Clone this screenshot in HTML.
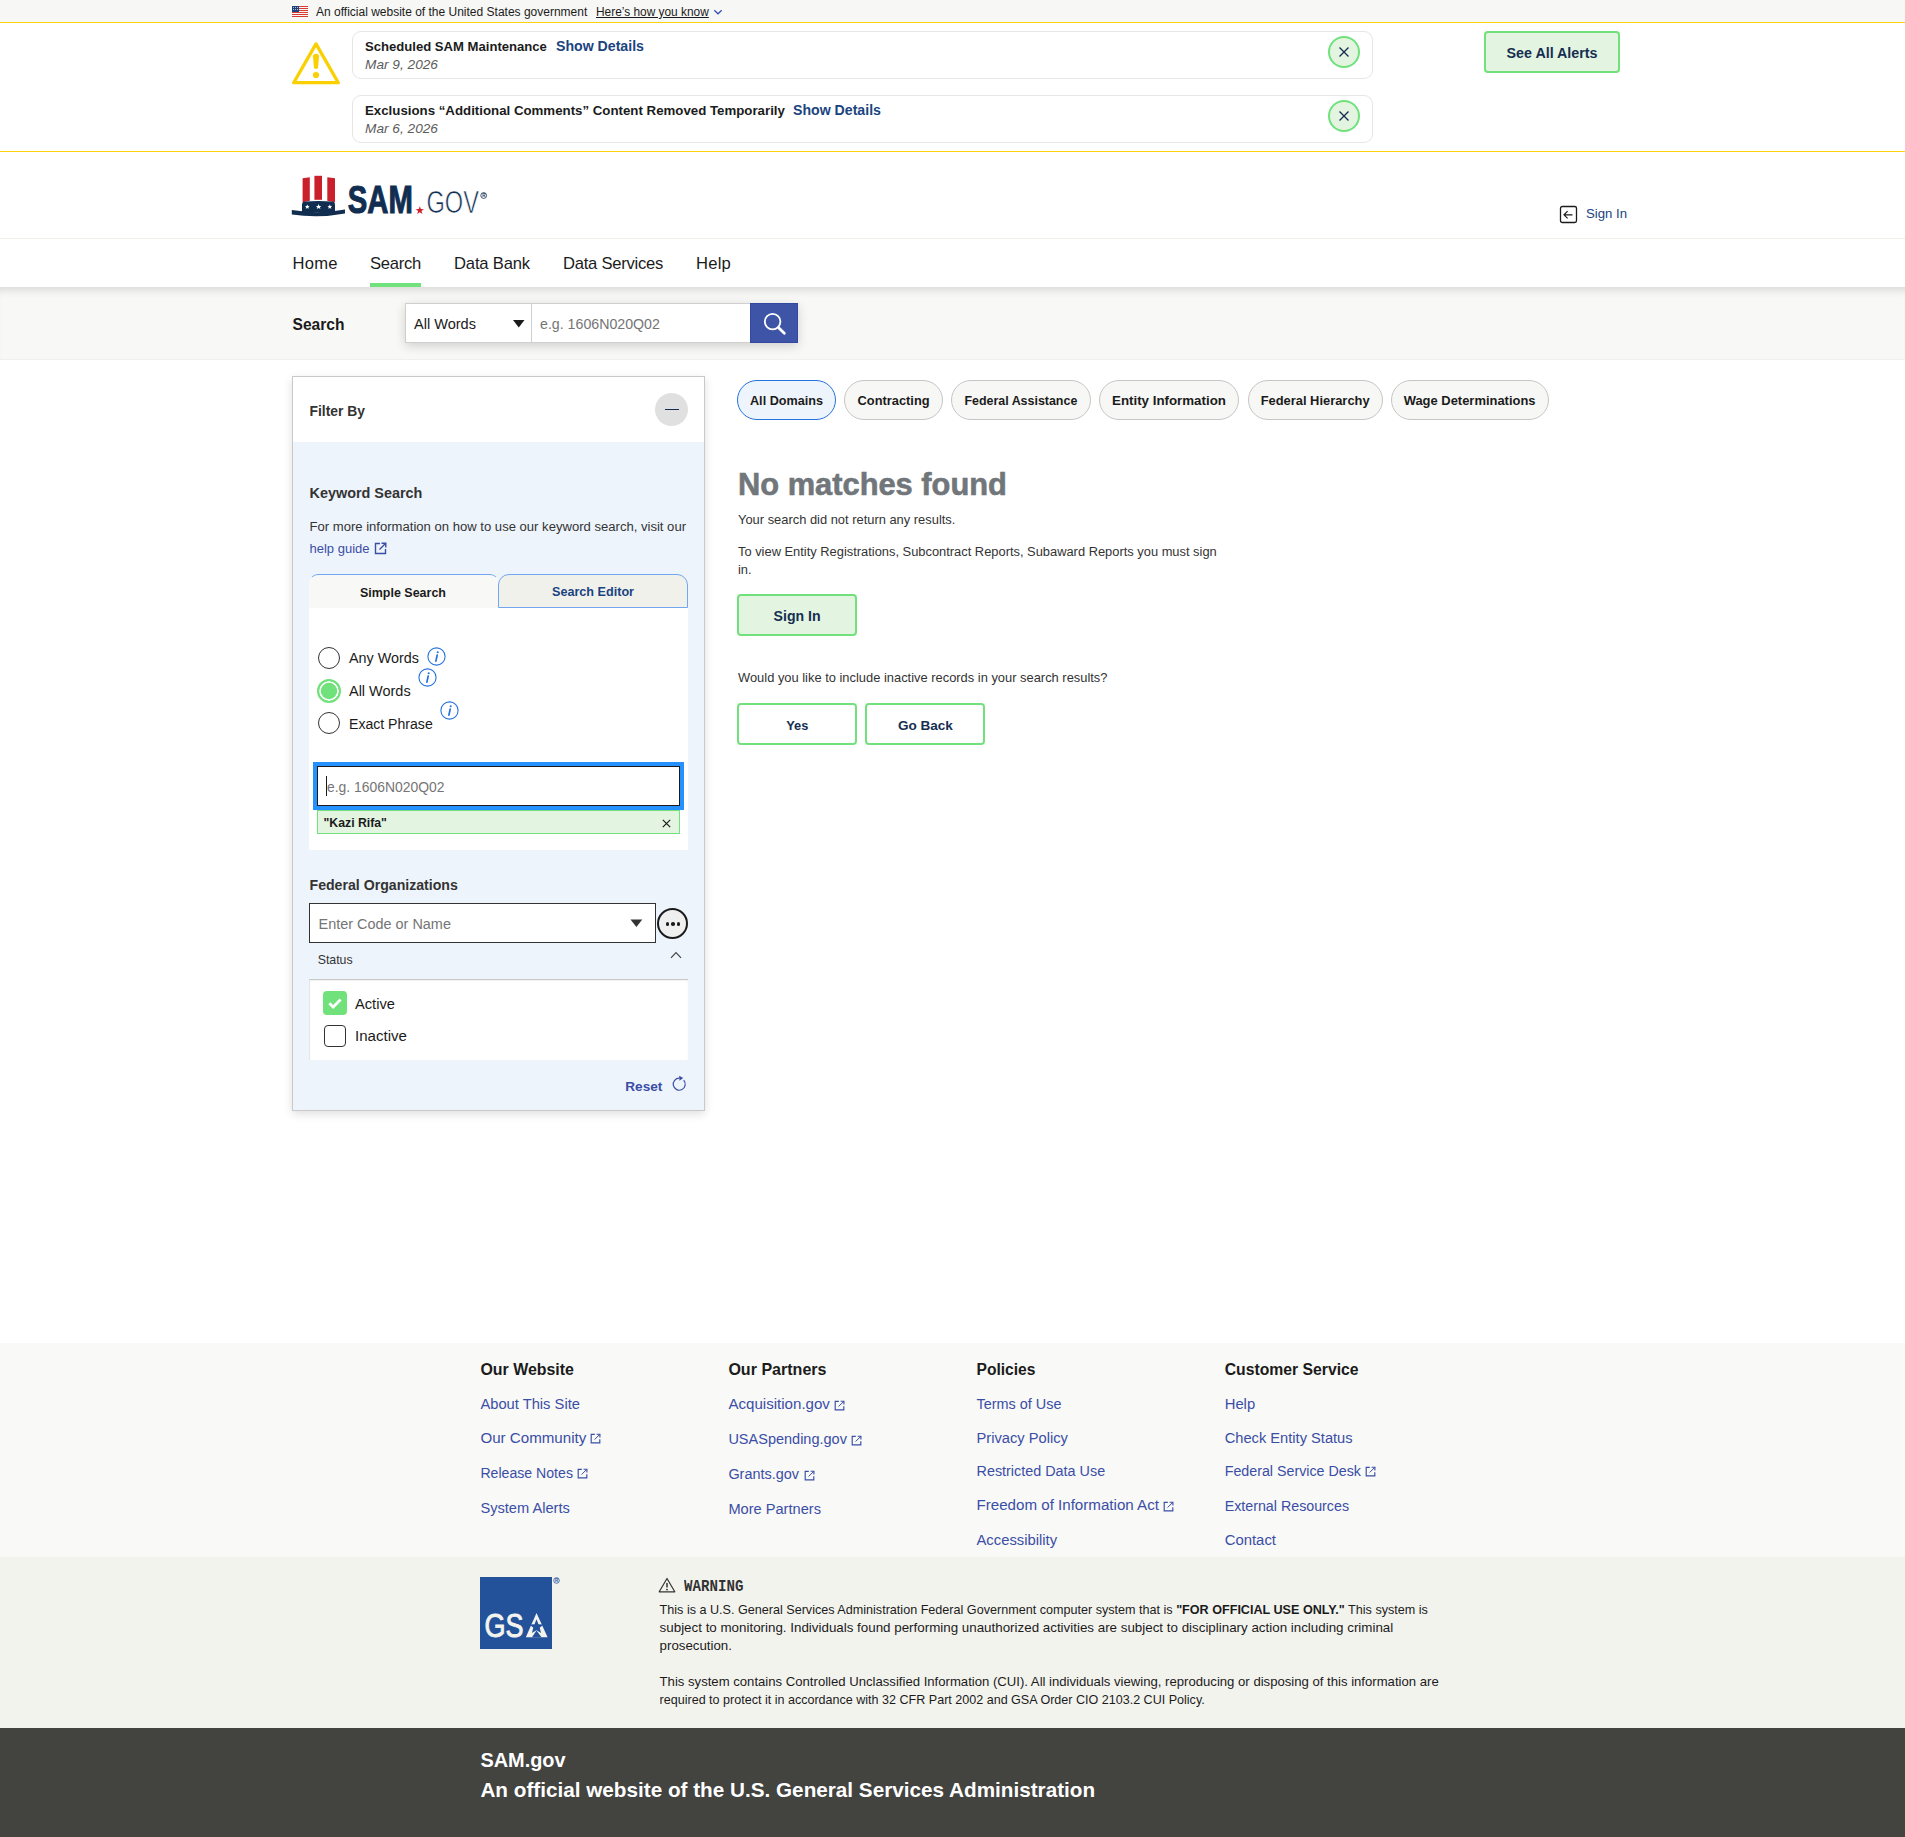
<!DOCTYPE html>
<html><head><meta charset="utf-8"><title>SAM.gov | Search</title>
<style>
html,body{margin:0;padding:0;}
body{width:1905px;height:1837px;position:relative;overflow:hidden;background:#fff;font-family:"Liberation Sans", sans-serif;}
.t{position:absolute;white-space:nowrap;line-height:1;}
.r{position:absolute;}
svg.r{overflow:visible;}
</style></head><body>
<div class="r" style="left:0px;top:0px;width:1905px;height:22px;background:#f7f7f5"></div>
<div class="r" style="left:0px;top:22px;width:1905px;height:1px;background:#fcd20a"></div>
<svg class="r" style="left:292px;top:6px;" width="16" height="11" viewBox="0 0 16 11"><rect x="0" y="0" width="16" height="1" fill="#d83933"/><rect x="0" y="2" width="16" height="1" fill="#d83933"/><rect x="0" y="4" width="16" height="1" fill="#d83933"/><rect x="0" y="6" width="16" height="1" fill="#d83933"/><rect x="0" y="8" width="16" height="1" fill="#d83933"/><rect x="0" y="10" width="16" height="1" fill="#d83933"/><rect x="0" y="0" width="7" height="6" fill="#1a4480"/><rect x="1" y="1" width="0.8" height="0.8" fill="#fff"/><rect x="1" y="3" width="0.8" height="0.8" fill="#fff"/><rect x="3" y="1" width="0.8" height="0.8" fill="#fff"/><rect x="3" y="3" width="0.8" height="0.8" fill="#fff"/><rect x="5" y="1" width="0.8" height="0.8" fill="#fff"/><rect x="5" y="3" width="0.8" height="0.8" fill="#fff"/></svg>
<div class="t" style="left:316.0px;top:6.00px;font-size:12.000px;font-weight:400;color:#1b1b1b;font-style:normal;font-family:'Liberation Sans', sans-serif;">An official website of the United States government</div>
<div class="t" style="left:596.0px;top:7.00px;font-size:11.900px;font-weight:400;color:#1b1b1b;font-style:normal;font-family:'Liberation Sans', sans-serif;text-decoration:underline;">Here’s how you know</div>
<svg class="r" style="left:713px;top:8px;" width="10" height="8" viewBox="0 0 10 8"><path d="M1.3 2.2 L5 5.8 L8.7 2.2" fill="none" stroke="#3b52b4" stroke-width="1.3"/></svg>
<div class="r" style="left:0px;top:151px;width:1905px;height:1px;background:#fcd20a"></div>
<svg class="r" style="left:292px;top:42px;" width="48" height="43" viewBox="0 0 48 43"><path d="M24 1.9 L46.3 40.7 L1.7 40.7 Z" fill="none" stroke="#fad000" stroke-width="3.3" stroke-linejoin="round"/><path d="M21 14.6 Q21 11.8 24 11.8 Q27 11.8 27 14.6 L26.1 25.3 Q25.9 26.9 24 26.9 Q22.1 26.9 21.9 25.3 Z" fill="#fad000"/><circle cx="24" cy="33" r="3.1" fill="#fad000"/></svg>
<div class="r" style="left:352px;top:31px;width:1021px;height:48px;border:1px solid #e6e6e6;border-radius:9px;box-sizing:border-box;background:#fff"></div>
<div class="t" style="left:365.0px;top:40.00px;font-size:13.100px;font-weight:700;color:#1b1b1b;font-style:normal;font-family:'Liberation Sans', sans-serif;">Scheduled SAM Maintenance</div>
<div class="t" style="left:365.0px;top:58.00px;font-size:13.680px;font-weight:400;color:#5c5c5c;font-style:italic;font-family:'Liberation Sans', sans-serif;">Mar 9, 2026</div>
<div class="r" style="left:1328px;top:36px;width:32px;height:32px;border:2px solid #70e17b;border-radius:50%;box-sizing:border-box;background:#e3f5e1"></div>
<svg class="r" style="left:1338px;top:46px;" width="12" height="12" viewBox="0 0 12 12"><path d="M1.5 1.5 L10.5 10.5 M10.5 1.5 L1.5 10.5" stroke="#162e51" stroke-width="1.4"/></svg>
<div class="r" style="left:352px;top:95px;width:1021px;height:48px;border:1px solid #e6e6e6;border-radius:9px;box-sizing:border-box;background:#fff"></div>
<div class="t" style="left:365.0px;top:104.00px;font-size:13.270px;font-weight:700;color:#1b1b1b;font-style:normal;font-family:'Liberation Sans', sans-serif;">Exclusions “Additional Comments” Content Removed Temporarily</div>
<div class="t" style="left:365.0px;top:122.00px;font-size:13.680px;font-weight:400;color:#5c5c5c;font-style:italic;font-family:'Liberation Sans', sans-serif;">Mar 6, 2026</div>
<div class="r" style="left:1328px;top:100px;width:32px;height:32px;border:2px solid #70e17b;border-radius:50%;box-sizing:border-box;background:#e3f5e1"></div>
<svg class="r" style="left:1338px;top:110px;" width="12" height="12" viewBox="0 0 12 12"><path d="M1.5 1.5 L10.5 10.5 M10.5 1.5 L1.5 10.5" stroke="#162e51" stroke-width="1.4"/></svg>
<div class="t" style="left:556.0px;top:39.00px;font-size:14.140px;font-weight:700;color:#1a4480;font-style:normal;font-family:'Liberation Sans', sans-serif;">Show Details</div>
<div class="t" style="left:793.0px;top:103.00px;font-size:14.140px;font-weight:700;color:#1a4480;font-style:normal;font-family:'Liberation Sans', sans-serif;">Show Details</div>
<div class="r" style="left:1484px;top:31px;width:136px;height:42px;border:2px solid #70e17b;border-radius:4px;box-sizing:border-box;background:#e3f5e1"></div>
<div class="t" style="left:1506.6px;top:46.00px;font-size:14.280px;font-weight:700;color:#162e51;font-style:normal;font-family:'Liberation Sans', sans-serif;">See All Alerts</div>
<svg class="r" style="left:291px;top:175px;" width="56" height="44" viewBox="0 0 56 44"><path d="M11.6 3.2 L18.8 2.2 L18.8 25.8 L11.6 27.2 Z" fill="#c9202c"/><path d="M23.4 0.8 L31 0.8 L31 24.8 L23.4 24.8 Z" fill="#c9202c"/><path d="M36.3 2.2 L44 3.2 L44 27.2 L36.3 25.8 Z" fill="#c9202c"/><path d="M11 37.5 L11 30 Q11 26.6 14 26.6 Q27.5 25.2 41 26.6 Q44 26.6 44 30 L44 37.5 Z" fill="#112e51"/><path d="M0.8 35 Q27.5 39.5 54 34.5 L54 38.5 Q27.5 43.5 0.8 39.5 Z" fill="#112e51"/><path d="M16.3 29.6 l0.7 1.5 1.6 0.1 -1.2 1 0.4 1.6 -1.5 -0.9 -1.5 0.9 0.4 -1.6 -1.2 -1 1.6 -0.1 Z" fill="#fff"/><path d="M27.6 29.1 l0.8 1.8 1.9 0.1 -1.4 1.2 0.5 1.9 -1.8 -1.1 -1.8 1.1 0.5 -1.9 -1.4 -1.2 1.9 -0.1 Z" fill="#fff"/><path d="M38.8 29.6 l0.7 1.5 1.6 0.1 -1.2 1 0.4 1.6 -1.5 -0.9 -1.5 0.9 0.4 -1.6 -1.2 -1 1.6 -0.1 Z" fill="#fff"/></svg>
<svg class="r" style="left:346px;top:180px;" width="145" height="40" viewBox="0 0 145 40"><text x="1.8" y="33" font-family="Liberation Sans" font-weight="700" font-size="39" fill="#112e51" stroke="#112e51" stroke-width="1.1" textLength="65" lengthAdjust="spacingAndGlyphs">SAM</text><path d="M73.8 26.2 l1.05 2.9 3.1 0.05 -2.45 1.9 0.9 2.95 -2.6 -1.75 -2.6 1.75 0.9 -2.95 -2.45 -1.9 3.1 -0.05 Z" fill="#d0202e"/><text x="80.5" y="33.3" font-family="Liberation Sans" font-weight="400" font-size="30.5" fill="#112e51" stroke="#fff" stroke-width="0.7" textLength="52.5" lengthAdjust="spacingAndGlyphs">GOV</text><circle cx="137.7" cy="15.5" r="2.9" fill="none" stroke="#112e51" stroke-width="0.8"/><text x="136.2" y="17.2" font-family="Liberation Sans" font-size="4.5" font-weight="700" fill="#112e51">R</text></svg>
<svg class="r" style="left:1559px;top:205px;" width="20" height="20" viewBox="0 0 20 20"><rect x="1.5" y="1.5" width="16" height="16" rx="1.8" fill="none" stroke="#1b1b1b" stroke-width="1.3"/><path d="M13.5 9.8 H5.2 M8.6 6.2 L5 9.8 L8.6 13.4" fill="none" stroke="#1b1b1b" stroke-width="1.2"/></svg>
<div class="t" style="left:1586.0px;top:207.00px;font-size:13.170px;font-weight:400;color:#1a4480;font-style:normal;font-family:'Liberation Sans', sans-serif;">Sign In</div>
<div class="r" style="left:0px;top:238px;width:1905px;height:1px;background:#f1f1ec"></div>
<div class="t" style="left:292.6px;top:256.00px;font-size:16.600px;font-weight:400;color:#1b1b1b;font-style:normal;font-family:'Liberation Sans', sans-serif;letter-spacing:0.180px;">Home</div>
<div class="t" style="left:370.0px;top:256.00px;font-size:16.600px;font-weight:400;color:#1b1b1b;font-style:normal;font-family:'Liberation Sans', sans-serif;letter-spacing:-0.266px;">Search</div>
<div class="t" style="left:454.0px;top:256.00px;font-size:16.600px;font-weight:400;color:#1b1b1b;font-style:normal;font-family:'Liberation Sans', sans-serif;letter-spacing:-0.168px;">Data Bank</div>
<div class="t" style="left:563.0px;top:256.00px;font-size:16.600px;font-weight:400;color:#1b1b1b;font-style:normal;font-family:'Liberation Sans', sans-serif;letter-spacing:-0.256px;">Data Services</div>
<div class="t" style="left:696.0px;top:256.00px;font-size:16.600px;font-weight:400;color:#1b1b1b;font-style:normal;font-family:'Liberation Sans', sans-serif;letter-spacing:0.215px;">Help</div>
<div class="r" style="left:370px;top:283px;width:51px;height:4px;background:#70e17b"></div>
<div class="r" style="left:0px;top:287px;width:1905px;height:73px;background:#f8f8f6;box-shadow:inset 0 9px 8px -6px rgba(0,0,0,0.13);border-bottom:1px solid #f0f1ec;box-sizing:border-box"></div>
<div class="t" style="left:292.5px;top:317.00px;font-size:15.590px;font-weight:700;color:#1b1b1b;font-style:normal;font-family:'Liberation Sans', sans-serif;">Search</div>
<div class="r" style="left:405px;top:303px;width:393px;height:40px;box-shadow:0 3px 10px rgba(0,0,0,0.16)"></div>
<div class="r" style="left:405px;top:303px;width:127px;height:40px;background:#fff;border:1px solid #cfcfcf;box-sizing:border-box"></div>
<div class="t" style="left:414.0px;top:317.00px;font-size:14.550px;font-weight:400;color:#1b1b1b;font-style:normal;font-family:'Liberation Sans', sans-serif;">All Words</div>
<svg class="r" style="left:513px;top:320px;" width="12" height="8" viewBox="0 0 12 8"><path d="M0 0 H11.5 L5.75 7.5 Z" fill="#1b1b1b"/></svg>
<div class="r" style="left:532px;top:303px;width:219px;height:40px;background:#fff;border:1px solid #cfcfcf;border-left:none;box-sizing:border-box"></div>
<div class="t" style="left:540.0px;top:317.00px;font-size:14.200px;font-weight:400;color:#757575;font-style:normal;font-family:'Liberation Sans', sans-serif;">e.g. 1606N020Q02</div>
<div class="r" style="left:750px;top:303px;width:48px;height:40px;background:#3e55a7;border:1px solid #3249a3;box-sizing:border-box"></div>
<svg class="r" style="left:760px;top:309px;" width="30" height="30" viewBox="0 0 30 30"><circle cx="12.6" cy="12.6" r="7.8" fill="none" stroke="#fff" stroke-width="1.8"/><path d="M18.4 18.4 L24.3 24.2" stroke="#fff" stroke-width="2.8" stroke-linecap="round"/></svg>
<div class="r" style="left:292px;top:376px;width:413px;height:735px;border:1px solid #c9c9c9;box-sizing:border-box;background:#eef4fb;box-shadow:0 3px 9px rgba(0,0,0,0.13)"></div>
<div class="r" style="left:293px;top:377px;width:411px;height:65px;background:#fff"></div>
<div class="t" style="left:309.5px;top:405.00px;font-size:13.871px;font-weight:700;color:#333;font-style:normal;font-family:'Liberation Sans', sans-serif;">Filter By</div>
<div class="r" style="left:655px;top:393px;width:33px;height:33px;background:#e0e0e0;border-radius:50%"></div>
<div class="r" style="left:665px;top:408.5px;width:14px;height:1.5px;background:#112e51"></div>
<div class="t" style="left:309.5px;top:486.00px;font-size:14.420px;font-weight:700;color:#333;font-style:normal;font-family:'Liberation Sans', sans-serif;">Keyword Search</div>
<div class="t" style="left:309.5px;top:520.00px;font-size:13.095px;font-weight:400;color:#333;font-style:normal;font-family:'Liberation Sans', sans-serif;">For more information on how to use our keyword search, visit our</div>
<div class="t" style="left:309.5px;top:542.00px;font-size:13.000px;font-weight:400;color:#3a4ea6;font-style:normal;font-family:'Liberation Sans', sans-serif;">help guide</div>
<svg class="r" style="left:374px;top:542px;" width="13" height="13" viewBox="0 0 13 13"><path d="M6 1.5 H1.5 V11.5 H11.5 V7" fill="none" stroke="#3a4ea6" stroke-width="1.4"/><path d="M7.5 1.2 H11.8 V5.5 M11.5 1.5 L5.5 7.5" fill="none" stroke="#3a4ea6" stroke-width="1.4"/></svg>
<div class="r" style="left:309px;top:608px;width:379px;height:242px;background:#fff"></div>
<div class="r" style="left:309px;top:574px;width:190px;height:34px;background:#f8f8f6;border:1px solid transparent;border-top-color:#73a6f0;border-bottom:none;border-radius:9px 9px 0 0;box-sizing:border-box"></div>
<div class="r" style="left:498px;top:574px;width:190px;height:34px;background:#f1f1ec;border:1px solid #73a6f0;border-radius:11px 11px 0 0;box-sizing:border-box"></div>
<div class="t" style="left:360.0px;top:587.00px;font-size:12.478px;font-weight:700;color:#1b1b1b;font-style:normal;font-family:'Liberation Sans', sans-serif;">Simple Search</div>
<div class="t" style="left:552.0px;top:586.00px;font-size:12.611px;font-weight:700;color:#1a4480;font-style:normal;font-family:'Liberation Sans', sans-serif;">Search Editor</div>
<div class="r" style="left:318px;top:647px;width:22px;height:22px;border:1.5px solid #333;border-radius:50%;box-sizing:border-box;background:#fff"></div>
<div class="r" style="left:317px;top:679px;width:24px;height:24px;border:2.5px solid #70e17b;border-radius:50%;box-sizing:border-box;background:#70e17b;box-shadow:inset 0 0 0 1.8px #fff"></div>
<div class="r" style="left:318px;top:711.5px;width:22px;height:22px;border:1.5px solid #333;border-radius:50%;box-sizing:border-box;background:#fff"></div>
<div class="t" style="left:349.0px;top:651.00px;font-size:14.367px;font-weight:400;color:#1b1b1b;font-style:normal;font-family:'Liberation Sans', sans-serif;">Any Words</div>
<div class="t" style="left:349.0px;top:684.00px;font-size:14.483px;font-weight:400;color:#1b1b1b;font-style:normal;font-family:'Liberation Sans', sans-serif;">All Words</div>
<div class="t" style="left:349.0px;top:717.00px;font-size:14.090px;font-weight:400;color:#1b1b1b;font-style:normal;font-family:'Liberation Sans', sans-serif;">Exact Phrase</div>
<svg class="r" style="left:426.5px;top:646.5px;" width="19" height="19" viewBox="0 0 19 19"><circle cx="9.5" cy="9.5" r="8.6" fill="none" stroke="#2672de" stroke-width="1.1"/><path d="M10.2 8 L8.9 14.2" stroke="#2672de" stroke-width="1.7" stroke-linecap="round"/><circle cx="10.7" cy="5.3" r="1.05" fill="#2672de"/></svg>
<svg class="r" style="left:418.1px;top:667.5px;" width="19" height="19" viewBox="0 0 19 19"><circle cx="9.5" cy="9.5" r="8.6" fill="none" stroke="#2672de" stroke-width="1.1"/><path d="M10.2 8 L8.9 14.2" stroke="#2672de" stroke-width="1.7" stroke-linecap="round"/><circle cx="10.7" cy="5.3" r="1.05" fill="#2672de"/></svg>
<svg class="r" style="left:440.3px;top:700.5px;" width="19" height="19" viewBox="0 0 19 19"><circle cx="9.5" cy="9.5" r="8.6" fill="none" stroke="#2672de" stroke-width="1.1"/><path d="M10.2 8 L8.9 14.2" stroke="#2672de" stroke-width="1.7" stroke-linecap="round"/><circle cx="10.7" cy="5.3" r="1.05" fill="#2672de"/></svg>
<div class="r" style="left:313px;top:762px;width:371px;height:48px;background:#2491ff"></div>
<div class="r" style="left:317px;top:766px;width:363px;height:40px;background:#fff;border:1px solid #1b1b1b;box-sizing:border-box"></div>
<div class="r" style="left:326px;top:776px;width:1.2px;height:20px;background:#1b1b1b"></div>
<div class="t" style="left:327.0px;top:781.00px;font-size:13.903px;font-weight:400;color:#757575;font-style:normal;font-family:'Liberation Sans', sans-serif;">e.g. 1606N020Q02</div>
<div class="r" style="left:317px;top:810px;width:363px;height:24px;background:#e3f5e1;border:1px solid #70e17b;border-bottom-width:1.5px;box-sizing:border-box"></div>
<div class="t" style="left:323.5px;top:817.00px;font-size:12.279px;font-weight:700;color:#1b1b1b;font-style:normal;font-family:'Liberation Sans', sans-serif;">"Kazi Rifa"</div>
<svg class="r" style="left:662px;top:818.5px;" width="9" height="9" viewBox="0 0 9 9"><path d="M0.8 0.8 L8.2 8.2 M8.2 0.8 L0.8 8.2" stroke="#1b1b1b" stroke-width="1.2"/></svg>
<div class="t" style="left:309.5px;top:878.00px;font-size:14.139px;font-weight:700;color:#333;font-style:normal;font-family:'Liberation Sans', sans-serif;">Federal Organizations</div>
<div class="r" style="left:309px;top:903px;width:347px;height:40px;background:#fff;border:1px solid #333;box-sizing:border-box"></div>
<div class="t" style="left:318.5px;top:917.00px;font-size:14.448px;font-weight:400;color:#757575;font-style:normal;font-family:'Liberation Sans', sans-serif;">Enter Code or Name</div>
<svg class="r" style="left:629.5px;top:918.5px;" width="13" height="9" viewBox="0 0 13 9"><path d="M0.5 0.5 H12.3 L6.4 8 Z" fill="#333"/></svg>
<div class="r" style="left:656.5px;top:907.5px;width:31px;height:31px;background:#efefef;border:2px solid #1b1b1b;border-radius:50%;box-sizing:border-box"></div>
<div class="r" style="left:665.8000000000001px;top:922.2px;width:3.6px;height:3.6px;background:#1b1b1b;border-radius:50%"></div>
<div class="r" style="left:671.2px;top:922.2px;width:3.6px;height:3.6px;background:#1b1b1b;border-radius:50%"></div>
<div class="r" style="left:676.6px;top:922.2px;width:3.6px;height:3.6px;background:#1b1b1b;border-radius:50%"></div>
<div class="t" style="left:317.7px;top:954.00px;font-size:12.346px;font-weight:400;color:#333;font-style:normal;font-family:'Liberation Sans', sans-serif;">Status</div>
<svg class="r" style="left:670px;top:951px;" width="12" height="8" viewBox="0 0 12 8"><path d="M1 6.8 L6 1.6 L11 6.8" fill="none" stroke="#444" stroke-width="1.2"/></svg>
<div class="r" style="left:309px;top:979px;width:379px;height:81px;background:#fff;border-top:1px solid #c8c8c8;border-left:1px solid #e6e6e6;box-sizing:border-box;box-shadow:inset 0 1px 2px rgba(0,0,0,0.06)"></div>
<div class="r" style="left:323px;top:991px;width:24px;height:24px;background:#70e17b;border-radius:4px"></div>
<svg class="r" style="left:323px;top:991px;" width="24" height="24" viewBox="0 0 24 24"><path d="M6.3 12.3 L10.2 16 L17.6 8.6" fill="none" stroke="#fff" stroke-width="2.8"/></svg>
<div class="t" style="left:355.0px;top:997.00px;font-size:14.688px;font-weight:400;color:#1b1b1b;font-style:normal;font-family:'Liberation Sans', sans-serif;">Active</div>
<div class="r" style="left:324px;top:1025px;width:22px;height:22px;border:1.6px solid #333;border-radius:4px;box-sizing:border-box;background:#fff"></div>
<div class="t" style="left:355.0px;top:1028.00px;font-size:15.088px;font-weight:400;color:#1b1b1b;font-style:normal;font-family:'Liberation Sans', sans-serif;">Inactive</div>
<div class="t" style="left:625.3px;top:1080.00px;font-size:13.584px;font-weight:700;color:#3a4ea6;font-style:normal;font-family:'Liberation Sans', sans-serif;">Reset</div>
<svg class="r" style="left:671px;top:1075px;" width="17" height="17" viewBox="0 0 17 17"><path d="M12.7 5.2 A6 6 0 1 1 8.5 3.2" fill="none" stroke="#3a4ea6" stroke-width="1.2"/><path d="M8.2 0.8 L12.2 3 L8.5 5.8 Z" fill="#3a4ea6"/></svg>
<div class="r" style="left:737px;top:380px;width:99px;height:40px;background:#eef4fb;border:1px solid #2672de;border-radius:20px;box-sizing:border-box"></div>
<div class="t" style="left:750.0px;top:395.00px;font-size:12.632px;font-weight:700;color:#1b1b1b;font-style:normal;font-family:'Liberation Sans', sans-serif;">All Domains</div>
<div class="r" style="left:844px;top:380px;width:99px;height:40px;background:#f7f7f5;border:1px solid #c6c6c6;border-radius:20px;box-sizing:border-box"></div>
<div class="t" style="left:857.6px;top:395.00px;font-size:12.832px;font-weight:700;color:#1b1b1b;font-style:normal;font-family:'Liberation Sans', sans-serif;">Contracting</div>
<div class="r" style="left:951px;top:380px;width:140px;height:40px;background:#f7f7f5;border:1px solid #c6c6c6;border-radius:20px;box-sizing:border-box"></div>
<div class="t" style="left:964.4px;top:395.00px;font-size:12.447px;font-weight:700;color:#1b1b1b;font-style:normal;font-family:'Liberation Sans', sans-serif;">Federal Assistance</div>
<div class="r" style="left:1099px;top:380px;width:140px;height:40px;background:#f7f7f5;border:1px solid #c6c6c6;border-radius:20px;box-sizing:border-box"></div>
<div class="t" style="left:1112.0px;top:394.00px;font-size:13.325px;font-weight:700;color:#1b1b1b;font-style:normal;font-family:'Liberation Sans', sans-serif;">Entity Information</div>
<div class="r" style="left:1247.5px;top:380px;width:135px;height:40px;background:#f7f7f5;border:1px solid #c6c6c6;border-radius:20px;box-sizing:border-box"></div>
<div class="t" style="left:1260.7px;top:395.00px;font-size:12.901px;font-weight:700;color:#1b1b1b;font-style:normal;font-family:'Liberation Sans', sans-serif;">Federal Hierarchy</div>
<div class="r" style="left:1391px;top:380px;width:158px;height:40px;background:#f7f7f5;border:1px solid #c6c6c6;border-radius:20px;box-sizing:border-box"></div>
<div class="t" style="left:1403.7px;top:395.00px;font-size:12.958px;font-weight:700;color:#1b1b1b;font-style:normal;font-family:'Liberation Sans', sans-serif;">Wage Determinations</div>
<div class="t" style="left:738.0px;top:470.00px;font-size:30.839px;font-weight:700;color:#71767a;font-style:normal;font-family:'Liberation Sans', sans-serif;-webkit-text-stroke:0.6px #71767a;">No matches found</div>
<div class="t" style="left:738.0px;top:514.00px;font-size:12.905px;font-weight:400;color:#333;font-style:normal;font-family:'Liberation Sans', sans-serif;">Your search did not return any results.</div>
<div class="t" style="left:738.0px;top:546.00px;font-size:12.882px;font-weight:400;color:#333;font-style:normal;font-family:'Liberation Sans', sans-serif;">To view Entity Registrations, Subcontract Reports, Subaward Reports you must sign</div>
<div class="t" style="left:738.0px;top:564.00px;font-size:12.900px;font-weight:400;color:#333;font-style:normal;font-family:'Liberation Sans', sans-serif;">in.</div>
<div class="r" style="left:737px;top:594px;width:120px;height:42px;background:#e3f5e1;border:2px solid #70e17b;border-radius:4px;box-sizing:border-box"></div>
<div class="t" style="left:773.6px;top:609.00px;font-size:14.101px;font-weight:700;color:#162e51;font-style:normal;font-family:'Liberation Sans', sans-serif;">Sign In</div>
<div class="t" style="left:738.0px;top:672.00px;font-size:12.909px;font-weight:400;color:#333;font-style:normal;font-family:'Liberation Sans', sans-serif;">Would you like to include inactive records in your search results?</div>
<div class="r" style="left:737px;top:703px;width:120px;height:42px;background:#fff;border:2px solid #70e17b;border-radius:4px;box-sizing:border-box"></div>
<div class="r" style="left:865px;top:703px;width:120px;height:42px;background:#fff;border:2px solid #70e17b;border-radius:4px;box-sizing:border-box"></div>
<div class="t" style="left:786.2px;top:720.00px;font-size:12.875px;font-weight:700;color:#162e51;font-style:normal;font-family:'Liberation Sans', sans-serif;">Yes</div>
<div class="t" style="left:897.9px;top:719.00px;font-size:13.556px;font-weight:700;color:#162e51;font-style:normal;font-family:'Liberation Sans', sans-serif;">Go Back</div>
<div class="r" style="left:0px;top:1343px;width:1905px;height:214px;background:#f9f9f7"></div>
<div class="r" style="left:0px;top:1557px;width:1905px;height:171px;background:#f3f3ee"></div>
<div class="r" style="left:0px;top:1728px;width:1905px;height:109px;background:#43433f"></div>
<div class="t" style="left:480.4px;top:1362.00px;font-size:15.941px;font-weight:700;color:#1b1b1b;font-style:normal;font-family:'Liberation Sans', sans-serif;">Our Website</div>
<div class="t" style="left:480.4px;top:1397.00px;font-size:14.727px;font-weight:400;color:#3a4ea6;font-style:normal;font-family:'Liberation Sans', sans-serif;">About This Site</div>
<div class="t" style="left:480.4px;top:1430.00px;font-size:15.139px;font-weight:400;color:#3a4ea6;font-style:normal;font-family:'Liberation Sans', sans-serif;">Our Community</div>
<svg class="r" style="left:590px;top:1433px;" width="11" height="11" viewBox="0 0 11 11"><path d="M4.8 1.3 H1.2 V9.9 H9.8 V6.2" fill="none" stroke="#3a4ea6" stroke-width="1.15"/><path d="M6.6 1.2 H9.9 V4.5" fill="none" stroke="#3a4ea6" stroke-width="1.15"/><path d="M9.8 1.3 L4.6 6.5" stroke="#3a4ea6" stroke-width="1"/></svg>
<div class="t" style="left:480.4px;top:1466.00px;font-size:14.118px;font-weight:400;color:#3a4ea6;font-style:normal;font-family:'Liberation Sans', sans-serif;">Release Notes</div>
<svg class="r" style="left:576.6px;top:1468px;" width="11" height="11" viewBox="0 0 11 11"><path d="M4.8 1.3 H1.2 V9.9 H9.8 V6.2" fill="none" stroke="#3a4ea6" stroke-width="1.15"/><path d="M6.6 1.2 H9.9 V4.5" fill="none" stroke="#3a4ea6" stroke-width="1.15"/><path d="M9.8 1.3 L4.6 6.5" stroke="#3a4ea6" stroke-width="1"/></svg>
<div class="t" style="left:480.4px;top:1501.00px;font-size:14.658px;font-weight:400;color:#3a4ea6;font-style:normal;font-family:'Liberation Sans', sans-serif;">System Alerts</div>
<div class="t" style="left:728.4px;top:1361.00px;font-size:16.063px;font-weight:700;color:#1b1b1b;font-style:normal;font-family:'Liberation Sans', sans-serif;">Our Partners</div>
<div class="t" style="left:728.4px;top:1396.00px;font-size:15.105px;font-weight:400;color:#3a4ea6;font-style:normal;font-family:'Liberation Sans', sans-serif;">Acquisition.gov</div>
<svg class="r" style="left:834.4px;top:1400px;" width="11" height="11" viewBox="0 0 11 11"><path d="M4.8 1.3 H1.2 V9.9 H9.8 V6.2" fill="none" stroke="#3a4ea6" stroke-width="1.15"/><path d="M6.6 1.2 H9.9 V4.5" fill="none" stroke="#3a4ea6" stroke-width="1.15"/><path d="M9.8 1.3 L4.6 6.5" stroke="#3a4ea6" stroke-width="1"/></svg>
<div class="t" style="left:728.4px;top:1432.00px;font-size:14.512px;font-weight:400;color:#3a4ea6;font-style:normal;font-family:'Liberation Sans', sans-serif;">USASpending.gov</div>
<svg class="r" style="left:851px;top:1434.5px;" width="11" height="11" viewBox="0 0 11 11"><path d="M4.8 1.3 H1.2 V9.9 H9.8 V6.2" fill="none" stroke="#3a4ea6" stroke-width="1.15"/><path d="M6.6 1.2 H9.9 V4.5" fill="none" stroke="#3a4ea6" stroke-width="1.15"/><path d="M9.8 1.3 L4.6 6.5" stroke="#3a4ea6" stroke-width="1"/></svg>
<div class="t" style="left:728.4px;top:1467.00px;font-size:14.434px;font-weight:400;color:#3a4ea6;font-style:normal;font-family:'Liberation Sans', sans-serif;">Grants.gov</div>
<svg class="r" style="left:803.6px;top:1470px;" width="11" height="11" viewBox="0 0 11 11"><path d="M4.8 1.3 H1.2 V9.9 H9.8 V6.2" fill="none" stroke="#3a4ea6" stroke-width="1.15"/><path d="M6.6 1.2 H9.9 V4.5" fill="none" stroke="#3a4ea6" stroke-width="1.15"/><path d="M9.8 1.3 L4.6 6.5" stroke="#3a4ea6" stroke-width="1"/></svg>
<div class="t" style="left:728.4px;top:1502.00px;font-size:14.616px;font-weight:400;color:#3a4ea6;font-style:normal;font-family:'Liberation Sans', sans-serif;">More Partners</div>
<div class="t" style="left:976.5px;top:1362.00px;font-size:15.609px;font-weight:700;color:#1b1b1b;font-style:normal;font-family:'Liberation Sans', sans-serif;">Policies</div>
<div class="t" style="left:976.5px;top:1397.00px;font-size:14.431px;font-weight:400;color:#3a4ea6;font-style:normal;font-family:'Liberation Sans', sans-serif;">Terms of Use</div>
<div class="t" style="left:976.5px;top:1431.00px;font-size:14.702px;font-weight:400;color:#3a4ea6;font-style:normal;font-family:'Liberation Sans', sans-serif;">Privacy Policy</div>
<div class="t" style="left:976.5px;top:1464.00px;font-size:14.383px;font-weight:400;color:#3a4ea6;font-style:normal;font-family:'Liberation Sans', sans-serif;">Restricted Data Use</div>
<div class="t" style="left:976.5px;top:1497.00px;font-size:15.131px;font-weight:400;color:#3a4ea6;font-style:normal;font-family:'Liberation Sans', sans-serif;">Freedom of Information Act</div>
<svg class="r" style="left:1163px;top:1500.8px;" width="11" height="11" viewBox="0 0 11 11"><path d="M4.8 1.3 H1.2 V9.9 H9.8 V6.2" fill="none" stroke="#3a4ea6" stroke-width="1.15"/><path d="M6.6 1.2 H9.9 V4.5" fill="none" stroke="#3a4ea6" stroke-width="1.15"/><path d="M9.8 1.3 L4.6 6.5" stroke="#3a4ea6" stroke-width="1"/></svg>
<div class="t" style="left:976.5px;top:1533.00px;font-size:14.818px;font-weight:400;color:#3a4ea6;font-style:normal;font-family:'Liberation Sans', sans-serif;">Accessibility</div>
<div class="t" style="left:1224.7px;top:1362.00px;font-size:15.757px;font-weight:700;color:#1b1b1b;font-style:normal;font-family:'Liberation Sans', sans-serif;">Customer Service</div>
<div class="t" style="left:1224.7px;top:1397.00px;font-size:14.829px;font-weight:400;color:#3a4ea6;font-style:normal;font-family:'Liberation Sans', sans-serif;">Help</div>
<div class="t" style="left:1224.7px;top:1431.00px;font-size:14.669px;font-weight:400;color:#3a4ea6;font-style:normal;font-family:'Liberation Sans', sans-serif;">Check Entity Status</div>
<div class="t" style="left:1224.7px;top:1464.00px;font-size:14.258px;font-weight:400;color:#3a4ea6;font-style:normal;font-family:'Liberation Sans', sans-serif;">Federal Service Desk</div>
<svg class="r" style="left:1365.2px;top:1466px;" width="11" height="11" viewBox="0 0 11 11"><path d="M4.8 1.3 H1.2 V9.9 H9.8 V6.2" fill="none" stroke="#3a4ea6" stroke-width="1.15"/><path d="M6.6 1.2 H9.9 V4.5" fill="none" stroke="#3a4ea6" stroke-width="1.15"/><path d="M9.8 1.3 L4.6 6.5" stroke="#3a4ea6" stroke-width="1"/></svg>
<div class="t" style="left:1224.7px;top:1499.00px;font-size:14.268px;font-weight:400;color:#3a4ea6;font-style:normal;font-family:'Liberation Sans', sans-serif;">External Resources</div>
<div class="t" style="left:1224.7px;top:1533.00px;font-size:14.885px;font-weight:400;color:#3a4ea6;font-style:normal;font-family:'Liberation Sans', sans-serif;">Contact</div>
<div class="r" style="left:480px;top:1577px;width:72px;height:72px;background:#23529b"></div>
<svg class="r" style="left:480px;top:1577px;" width="72" height="72" viewBox="0 0 72 72"><text x="4.6" y="60.2" font-family="Liberation Sans" font-weight="400" font-size="34" fill="#f4f4ef" stroke="#f4f4ef" stroke-width="0.9" textLength="39" lengthAdjust="spacingAndGlyphs">GS</text><path d="M56.5 36 L67.6 60.2 L45.8 60.2 Z" fill="#f4f4ef"/><path d="M56.5 53.5 L61.5 60.3 L52 60.3 Z" fill="#23529b"/><path d="M56.5 42.3 L58.5 47.3 L63.6 47.5 L59.7 50.8 L61.1 56 L56.5 53.2 L51.9 56 L53.3 50.8 L49.4 47.5 L54.5 47.3 Z" fill="#23529b"/></svg>
<svg class="r" style="left:553px;top:1577px;" width="8" height="8" viewBox="0 0 8 8"><circle cx="3.5" cy="3.5" r="2.8" fill="none" stroke="#23529b" stroke-width="0.8"/><text x="2" y="5.2" font-family="Liberation Sans" font-size="4.5" font-weight="700" fill="#23529b">R</text></svg>
<svg class="r" style="left:658px;top:1577px;" width="18" height="16" viewBox="0 0 18 16"><path d="M9 1.5 L16.8 14.8 H1.2 Z" fill="none" stroke="#333" stroke-width="1.2" stroke-linejoin="round"/><path d="M9 6 V10.5" stroke="#333" stroke-width="1.5"/><circle cx="9" cy="12.6" r="0.9" fill="#333"/></svg>
<div class="t" style="left:683.6px;top:1579.00px;font-size:16.200px;font-weight:700;color:#333;font-style:normal;font-family:'Liberation Mono', monospace;transform:scaleX(0.873);transform-origin:0 0;">WARNING</div>
<div class="t" style="left:659.6px;top:1604.00px;font-size:12.606px;font-weight:400;color:#1b1b1b;font-style:normal;font-family:'Liberation Sans', sans-serif;">This is a U.S. General Services Administration Federal Government computer system that is <b>"FOR OFFICIAL USE ONLY."</b> This system is</div>
<div class="t" style="left:659.6px;top:1621.00px;font-size:13.375px;font-weight:400;color:#1b1b1b;font-style:normal;font-family:'Liberation Sans', sans-serif;">subject to monitoring. Individuals found performing unauthorized activities are subject to disciplinary action including criminal</div>
<div class="t" style="left:659.6px;top:1639.00px;font-size:13.290px;font-weight:400;color:#1b1b1b;font-style:normal;font-family:'Liberation Sans', sans-serif;">prosecution.</div>
<div class="t" style="left:659.6px;top:1675.00px;font-size:13.130px;font-weight:400;color:#1b1b1b;font-style:normal;font-family:'Liberation Sans', sans-serif;">This system contains Controlled Unclassified Information (CUI). All individuals viewing, reproducing or disposing of this information are</div>
<div class="t" style="left:659.6px;top:1694.00px;font-size:12.562px;font-weight:400;color:#1b1b1b;font-style:normal;font-family:'Liberation Sans', sans-serif;">required to protect it in accordance with 32 CFR Part 2002 and GSA Order CIO 2103.2 CUI Policy.</div>
<div class="t" style="left:480.4px;top:1751.00px;font-size:19.916px;font-weight:700;color:#fff;font-style:normal;font-family:'Liberation Sans', sans-serif;">SAM.gov</div>
<div class="t" style="left:480.4px;top:1780.00px;font-size:20.712px;font-weight:700;color:#fff;font-style:normal;font-family:'Liberation Sans', sans-serif;">An official website of the U.S. General Services Administration</div>
</body></html>
